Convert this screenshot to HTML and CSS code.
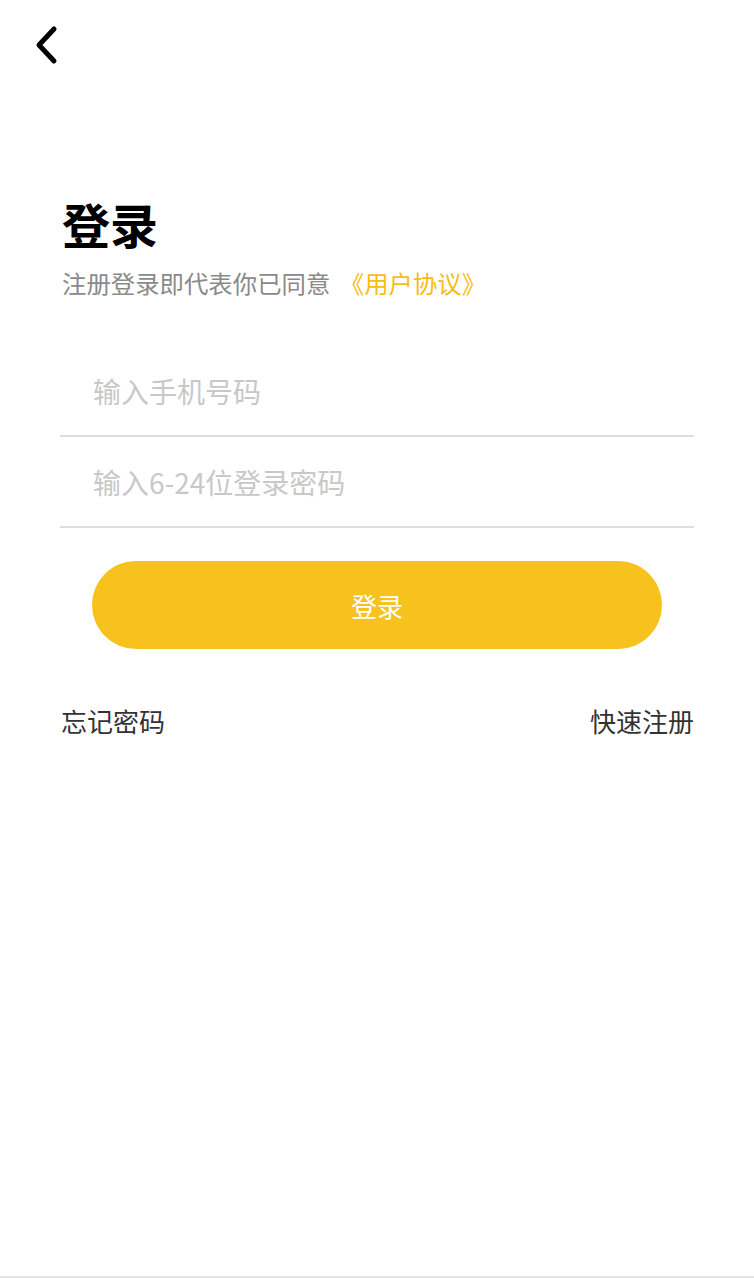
FILE: index.html
```html
<!DOCTYPE html>
<html lang="zh">
<head>
<meta charset="utf-8">
<title>登录</title>
<link rel="stylesheet" href="styles.css">
</head>
<body>
<div class="page">
  <header class="topbar">
    <a class="back" href="#" aria-label="返回">
      <svg width="26" height="40" viewBox="0 0 26 40"><path d="M20 4 L5 20 L20 36" fill="none" stroke="#000" stroke-width="5" stroke-linecap="round" stroke-linejoin="round"/></svg>
    </a>
  </header>
  <main class="content">
    <h1 class="title">登录</h1>
    <p class="subtitle">注册登录即代表你已同意 <a class="agree" href="#">《用户协议》</a></p>
    <form class="form">
      <div class="field"><input class="input" type="tel" placeholder="输入手机号码"></div>
      <div class="field"><input class="input" type="password" placeholder="输入6-24位登录密码"></div>
      <button class="submit" type="button">登录</button>
    </form>
    <div class="links">
      <a class="link" href="#">忘记密码</a>
      <a class="link" href="#">快速注册</a>
    </div>
  </main>
  <footer class="bottom"></footer>
</div>
</body>
</html>
```

FILE: styles.css
```css
* { box-sizing: border-box; }
html, body { margin: 0; padding: 0; background: #fff; }
body {
  font-family: "Noto Sans CJK SC", "Noto Sans", sans-serif;
  color: #333;
}
.page {
  height: 1280px;
  display: flex;
  flex-direction: column;
}
.topbar {
  height: 90px;
  padding: 25px 0 0 34px;
}
.back { display: inline-block; line-height: 0; }
.content {
  flex: 1;
  padding: 0 60px;
}
.title {
  margin: 103px 0 0 2px;
  font-size: 48px;
  line-height: 60px;
  font-weight: 700;
  color: #000;
}
.subtitle {
  margin: 13px 0 0 2px;
  font-size: 24.4px;
  line-height: 34px;
  color: #8a8a8a;
}
.agree { color: #f6bd16; text-decoration: none; margin-left: 4px; }
.form {
  margin-top: 46px;
  display: flex;
  flex-direction: column;
}
.field {
  height: 91px;
  border-bottom: 2px solid #dedede;
  display: flex;
  align-items: center;
  padding-top: 0;
}
.input {
  border: none;
  outline: none;
  width: 100%;
  padding: 0 0 0 33px;
  font-family: inherit;
  font-size: 28px;
  color: #333;
  background: transparent;
}
.input::placeholder { color: #c8c8c8; }
.submit {
  margin: 33px 32px 0 32px;
  height: 88px;
  border: none;
  border-radius: 44px;
  background: #f7c21e;
  color: #fff;
  font-family: inherit;
  font-size: 26px;
}
.links {
  margin-top: 54px;
  display: flex;
  justify-content: space-between;
  padding: 0 0 0 1px;
}
.link {
  font-size: 26px;
  line-height: 36px;
  color: #333;
  text-decoration: none;
}
.bottom {
  height: 4px;
  border-top: 2px solid #e2e2e2;
}
```
